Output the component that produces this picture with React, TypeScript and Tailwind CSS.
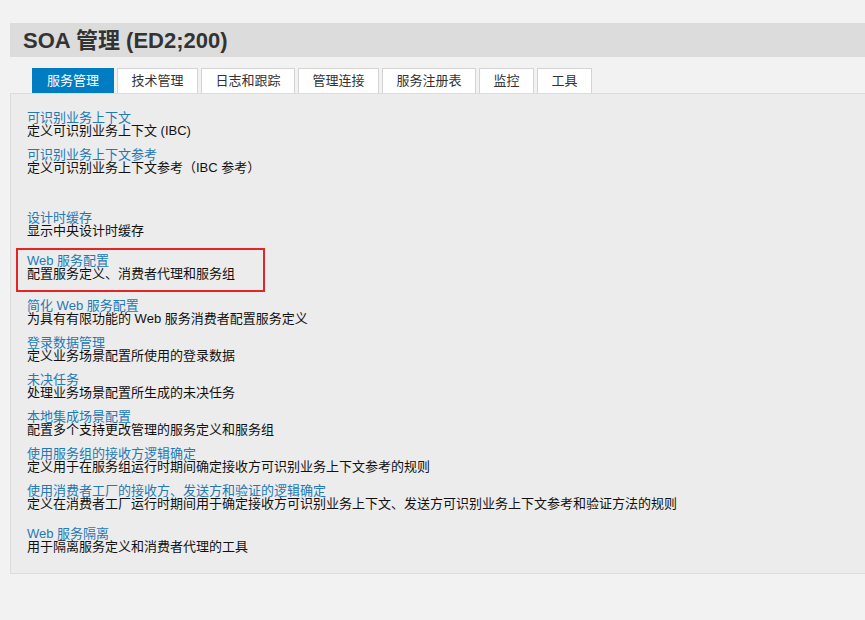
const tabs = ["服务管理", "技术管理", "日志和跟踪", "管理连接", "服务注册表", "监控", "工具"];

type Item = { title: string; desc: string; space: string; highlight?: boolean };

// space = margin above each entry, read off the screenshot
const items: Item[] = [
  { title: "可识别业务上下文", desc: "定义可识别业务上下文 (IBC)", space: "" },
  { title: "可识别业务上下文参考", desc: "定义可识别业务上下文参考（IBC 参考）", space: "mt-[11px]" },
  { title: "设计时缓存", desc: "显示中央设计时缓存", space: "mt-[37px]" },
  { title: "Web 服务配置", desc: "配置服务定义、消费者代理和服务组", space: "mt-[11px]", highlight: true },
  { title: "简化 Web 服务配置", desc: "为具有有限功能的 Web 服务消费者配置服务定义", space: "mt-[7px]" },
  { title: "登录数据管理", desc: "定义业务场景配置所使用的登录数据", space: "mt-[11px]" },
  { title: "未决任务", desc: "处理业务场景配置所生成的未决任务", space: "mt-[11px]" },
  { title: "本地集成场景配置", desc: "配置多个支持更改管理的服务定义和服务组", space: "mt-[11px]" },
  {
    title: "使用服务组的接收方逻辑确定",
    desc: "定义用于在服务组运行时期间确定接收方可识别业务上下文参考的规则",
    space: "mt-[11px]",
  },
  {
    title: "使用消费者工厂的接收方、发送方和验证的逻辑确定",
    desc: "定义在消费者工厂运行时期间用于确定接收方可识别业务上下文、发送方可识别业务上下文参考和验证方法的规则",
    space: "mt-[11px]",
  },
  { title: "Web 服务隔离", desc: "用于隔离服务定义和消费者代理的工具", space: "mt-[17px]" },
];

function Entry({ item }: { item: Item }) {
  return (
    <div className="flex flex-col text-[13px] leading-[13px]">
      <a className="cursor-pointer text-[#2379b6]">{item.title}</a>
      <span className="text-[#111]">{item.desc}</span>
    </div>
  );
}

export default function App() {
  return (
    <div
      className="min-h-[620px] w-[865px] bg-[#f2f2f2] pt-[23px]"
      style={{ fontFamily: '"Liberation Sans", "Noto Sans CJK SC", sans-serif' }}
    >
      <div className="ml-[10px] flex h-[34px] items-center bg-[#dcdcdc] pl-[13px]">
        <h1 className="text-[22px] font-bold text-[#333]">SOA 管理 (ED2;200)</h1>
      </div>

      <div className="ml-[32px] mt-[11px] flex gap-[3px]">
        {tabs.map((t, i) => (
          <div
            key={t}
            className={
              i === 0
                ? "flex h-[25px] items-center border border-[#007cc2] bg-[#007cc2] px-[14px] text-[13px] text-white"
                : "flex h-[25px] items-center border border-b-0 border-[#d4d4d4] bg-white px-[13.5px] text-[13px] text-[#333]"
            }
          >
            {t}
          </div>
        ))}
      </div>

      <div className="ml-[10px] flex flex-col border-b border-l border-t border-[#dcdcdc] bg-[#ececec] pb-[20px] pl-[16px] pt-[17px]">
        {items.map((item) =>
          item.highlight ? (
            <div
              key={item.title}
              className={`${item.space} -ml-[11px] w-[249px] border-2 border-[#e42525] pb-[10px] pl-[9px] pt-[4px]`}
            >
              <Entry item={item} />
            </div>
          ) : (
            <div key={item.title} className={item.space}>
              <Entry item={item} />
            </div>
          ),
        )}
      </div>
    </div>
  );
}
